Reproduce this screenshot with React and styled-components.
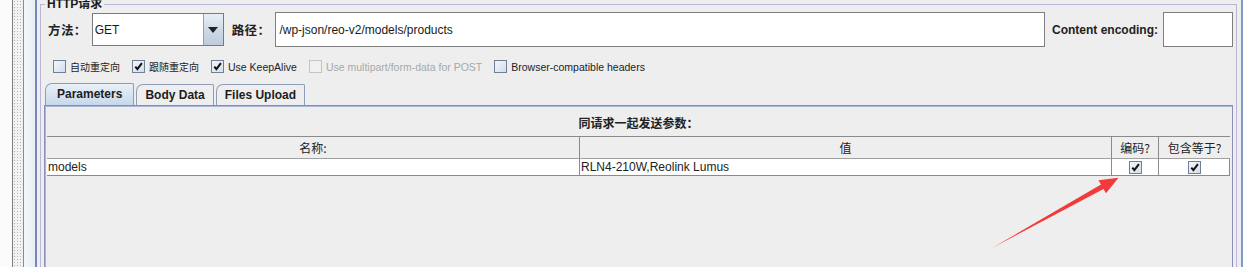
import React from 'react';
import styled, { createGlobalStyle } from 'styled-components';

const GlobalStyle = createGlobalStyle`
  html, body {
    margin: 0;
    padding: 0;
    background: #eeeeee;
  }
  body {
    font-family: "Liberation Sans", "Noto Sans CJK SC", sans-serif;
    font-size: 12px;
    color: #1a1a1a;
  }
`;

const Page = styled.div`
  position: relative;
  display: flex;
  width: 1243px;
  height: 267px;
  overflow: hidden;
  background: #eeeeee;
`;

const Gutter = styled.div`
  width: 12px;
  background: #fbfbfb;
  border-right: 1px solid #7c7c7c;
`;

const Splitter = styled.div`
  width: 10px;
  border-right: 1px solid #8a8a8a;
  background-color: #f2f2f2;
  background-image: radial-gradient(#b4b4b4 0.8px, transparent 0.9px);
  background-size: 3px 3px;
`;

const Spacer = styled.div`
  width: 11px;
  background: linear-gradient(90deg, #f3f6f9, #e9eef3);
`;

const Frame = styled.div`
  flex: 1;
  border-left: 2px solid #7686ba;
  border-right: 2px solid #7d9cc8;
  padding: 0 4px 0 3px;
  min-width: 0;
`;

const Fieldset = styled.div`
  position: relative;
  margin-top: 4px;
  height: 300px;
  border: 1px solid #b9b6da;
  border-bottom: none;
  padding: 7px 3px 0 3px;
`;

const Legend = styled.span`
  position: absolute;
  top: -8px;
  left: 4px;
  padding: 0 2px;
  background: #eeeeee;
  font-family: "Liberation Sans", "Noto Sans CJK SC", sans-serif;
  font-weight: bold;
  font-size: 12px;
  line-height: 14px;
`;

const MethodRow = styled.div`
  display: flex;
  align-items: center;
  height: 35px;
  padding-left: 4px;
`;

const Label = styled.span`
  font-family: ${p => (p.$cjk ? '"Noto Sans CJK SC", sans-serif' : '"Liberation Sans", sans-serif')};
  font-weight: bold;
  font-size: ${p => (p.$cjk ? '12.5px' : '12px')};
  letter-spacing: ${p => (p.$cjk ? '0.4px' : '0')};
  color: #222;
  margin-right: ${p => p.$gap || '7px'};
  white-space: nowrap;
`;

const Combo = styled.div`
  display: flex;
  width: 132px;
  height: 33px;
  margin-right: 8px;
  border: 1px solid #7a7a7a;
  box-sizing: border-box;
  background: #fff;
`;

const ComboValue = styled.div`
  flex: 1;
  display: flex;
  align-items: center;
  padding-left: 2px;
  font-size: 12px;
`;

const ComboButton = styled.div`
  width: 19px;
  display: flex;
  align-items: center;
  justify-content: center;
  border-left: 1px solid #8ea0b8;
  background: linear-gradient(180deg, #e8eef5 0%, #cdd8e6 55%, #bccbdd 100%);
`;

const TextField = styled.div`
  display: flex;
  align-items: center;
  height: 35px;
  box-sizing: border-box;
  border: 1px solid #7e7e7e;
  background: #fff;
  padding-left: 3px;
  font-size: 12px;
  flex: ${p => (p.$grow ? 1 : 'none')};
  width: ${p => p.$width || 'auto'};
  margin-right: ${p => p.$gap || '0'};
`;

const CheckRow = styled.div`
  display: flex;
  align-items: center;
  gap: 12px;
  margin-top: 12px;
  height: 15px;
  padding-left: 9px;
`;

const CheckItem = styled.label`
  display: flex;
  align-items: center;
  gap: 4px;
  font-family: ${p => (p.$cjk ? '"Noto Sans CJK SC", sans-serif' : '"Liberation Sans", sans-serif')};
  font-size: ${p => (p.$cjk ? '10px' : '10.5px')};
  color: ${p => (p.$disabled ? '#a8a8a8' : '#222')};
  white-space: nowrap;
`;

const Box = styled.span`
  display: inline-flex;
  align-items: center;
  justify-content: center;
  width: 13px;
  height: 13px;
  box-sizing: border-box;
  border: 1px solid ${p => (p.$disabled ? '#c4c4c4' : '#6f7f95')};
  background: ${p => (p.$disabled ? '#f0f0f0' : 'linear-gradient(135deg, #f4f7fb 0%, #d3dde9 100%)')};
`;

const TabStrip = styled.div`
  display: flex;
  align-items: flex-end;
  margin-top: 9px;
  height: 22px;
  padding-left: 1px;
`;

const Tab = styled.div`
  height: ${p => (p.$active ? '22px' : '21px')};
  box-sizing: border-box;
  display: flex;
  align-items: center;
  padding: 0 ${p => p.$pad || '10px'} ${p => (p.$active ? '1px' : '0')};
  margin-right: 2px;
  border: 1px solid #8f9cb8;
  border-bottom: none;
  border-radius: 7px 2px 0 0;
  font-weight: bold;
  font-size: 12px;
  color: #1d1d1d;
  background: ${p => (p.$active ? 'linear-gradient(180deg, #e8f0f8 0%, #c8d8ea 100%)' : '#eeeeee')};
`;

const TabPanel = styled.div`
  border: 1px solid #8d8db9;
  border-top-color: #7d8fbd;
  box-shadow: inset 1px 1px 0 #a9b8d8;
  padding: 0 2px;
  height: 200px;
`;

const PanelTitle = styled.div`
  margin-top: 9px;
  text-align: center;
  font-family: "Noto Sans CJK SC", sans-serif;
  font-weight: bold;
  font-size: 12px;
  line-height: 16px;
  color: #222;
`;

const Table = styled.div`
  margin-top: 5px;
  display: grid;
  grid-template-columns: 1fr 1fr 47px 72px;
  border-top: 1px solid #8a8a8a;
  border-bottom: 1px solid #8a8a8a;
`;

const HeadCell = styled.div`
  height: 21px;
  display: flex;
  align-items: center;
  justify-content: center;
  font-family: "Noto Sans CJK SC", sans-serif;
  font-size: 12px;
  color: #222;
  border-left: ${p => (p.$first ? 'none' : '1px solid #8a8a8a')};
  border-bottom: 1px solid #a0a0a0;
`;

const Cell = styled.div`
  height: 16px;
  display: flex;
  align-items: center;
  justify-content: ${p => (p.$center ? 'center' : 'flex-start')};
  padding-left: ${p => (p.$center ? '0' : '1px')};
  background: #fff;
  font-size: 12px;
  color: #222;
  border-left: ${p => (p.$first ? 'none' : '1px solid #8a8a8a')};
  border-right: ${p => (p.$last ? '1px solid #8a8a8a' : 'none')};
`;

const Overlay = styled.svg`
  position: absolute;
  left: 0;
  top: 0;
  pointer-events: none;
`;

function Check({ checked, disabled }) {
  return (
    <Box $disabled={disabled}>
      {checked && (
        <svg width="9" height="9" viewBox="0 0 9 9">
          <path d="M1.3 4.6 L3.4 7.2 L7.9 1.2" fill="none" stroke="#111" strokeWidth="2" />
        </svg>
      )}
    </Box>
  );
}

const options = [
  { label: '自动重定向', cjk: true },
  { label: '跟随重定向', cjk: true, checked: true },
  { label: 'Use KeepAlive', checked: true },
  { label: 'Use multipart/form-data for POST', disabled: true },
  { label: 'Browser-compatible headers' },
];

export default function App() {
  return (
    <>
      <GlobalStyle />
      <Page>
        <Gutter />
        <Splitter />
        <Spacer />
        <Frame>
          <Fieldset>
            <Legend>HTTP请求</Legend>
            <MethodRow>
              <Label $cjk $gap="5px">方法：</Label>
              <Combo>
                <ComboValue>GET</ComboValue>
                <ComboButton>
                  <svg width="10" height="6" viewBox="0 0 10 6">
                    <path d="M0 0 H10 L5 6 Z" fill="#222" />
                  </svg>
                </ComboButton>
              </Combo>
              <Label $cjk $gap="5px">路径：</Label>
              <TextField $grow $gap="7px">/wp-json/reo-v2/models/products</TextField>
              <Label $gap="5px">Content encoding:</Label>
              <TextField $width="70px" />
            </MethodRow>
            <CheckRow>
              {options.map(o => (
                <CheckItem key={o.label} $cjk={o.cjk} $disabled={o.disabled}>
                  <Check checked={o.checked} disabled={o.disabled} />
                  {o.label}
                </CheckItem>
              ))}
            </CheckRow>
            <TabStrip>
              <Tab $active $pad="11px">Parameters</Tab>
              <Tab $pad="8px">Body Data</Tab>
              <Tab $pad="8px">Files Upload</Tab>
            </TabStrip>
            <TabPanel>
              <PanelTitle>同请求一起发送参数：</PanelTitle>
              <Table>
                <HeadCell $first>名称:</HeadCell>
                <HeadCell>值</HeadCell>
                <HeadCell>编码?</HeadCell>
                <HeadCell>包含等于?</HeadCell>
                <Cell $first>models</Cell>
                <Cell>RLN4-210W,Reolink Lumus</Cell>
                <Cell $center><Check checked /></Cell>
                <Cell $center $last><Check checked /></Cell>
              </Table>
            </TabPanel>
          </Fieldset>
        </Frame>
        <Overlay width="1243" height="267" viewBox="0 0 1243 267">
          <polygon
            points="992,248 1101,184.6 1098.5,180.2 1118.5,177.8 1106,193.3 1103.5,188.9"
            fill="#f23a3a"
          />
        </Overlay>
      </Page>
    </>
  );
}
